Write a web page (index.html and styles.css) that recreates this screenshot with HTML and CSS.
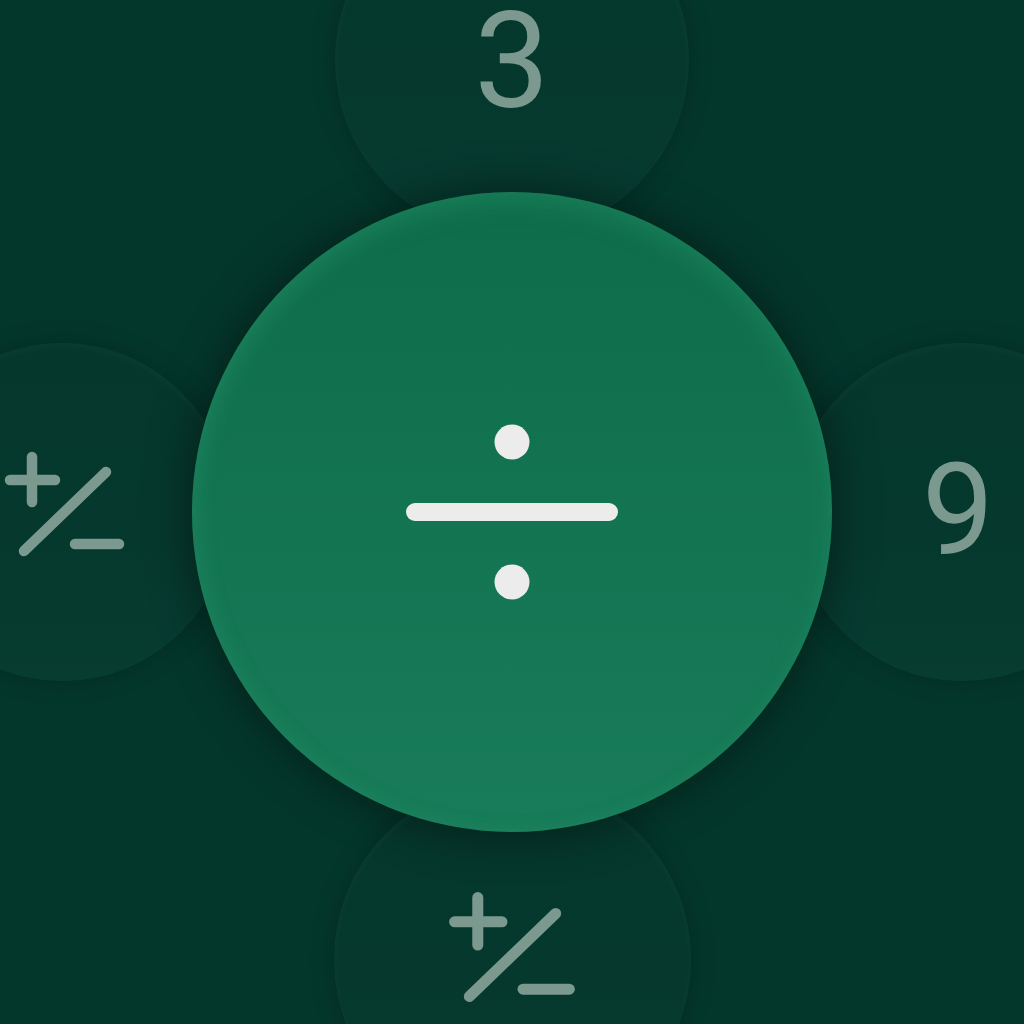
FILE: index.html
```html
<!DOCTYPE html>
<html lang="en">
<head>
<meta charset="utf-8">
<title>Calculator keys</title>
<link rel="stylesheet" href="styles.css">
</head>
<body>
<div class="stage">
  <div class="key key-top"><span class="digit digit-3">3</span></div>
  <div class="key key-left">
    <svg class="pm pm-left" viewBox="0 0 130 115" width="130" height="115" aria-label="plus minus">
      <g stroke="currentColor" stroke-width="10.5" stroke-linecap="round" fill="none">
        <line x1="10" y1="35" x2="55" y2="35"/>
        <line x1="32" y1="12" x2="32" y2="57"/>
        <line x1="24" y1="106" x2="106" y2="27"/>
        <line x1="75" y1="99" x2="119" y2="99"/>
      </g>
    </svg>
  </div>
  <div class="key key-right"><span class="digit digit-9">9</span></div>
  <div class="key key-bottom">
    <svg class="pm pm-bottom" viewBox="0 0 130 115" width="137" height="121" aria-label="plus minus">
      <g stroke="currentColor" stroke-width="10.5" stroke-linecap="round" fill="none">
        <line x1="10" y1="35" x2="55" y2="35"/>
        <line x1="32" y1="12" x2="32" y2="57"/>
        <line x1="24" y1="106" x2="106" y2="27"/>
        <line x1="75" y1="99" x2="119" y2="99"/>
      </g>
    </svg>
  </div>
  <div class="key key-main">
    <svg class="divide" viewBox="0 0 212 180" width="212" height="180" aria-label="divide">
      <line x1="9" y1="90" x2="203" y2="90" stroke="currentColor" stroke-width="18" stroke-linecap="round"/>
      <circle cx="106" cy="20" r="17.5" fill="currentColor"/>
      <circle cx="106" cy="160" r="17.5" fill="currentColor"/>
    </svg>
  </div>
</div>
</body>
</html>
```
FILE: styles.css
```css
html, body {
  margin: 0;
  padding: 0;
  width: 1024px;
  height: 1024px;
  overflow: hidden;
  background: #04372c;
}

.stage {
  position: relative;
  width: 1024px;
  height: 1024px;
  overflow: hidden;
  background: #04372c;
  font-family: Roboto, "Noto Sans", "DejaVu Sans", sans-serif;
}

.key {
  position: absolute;
  border-radius: 50%;
  display: flex;
  align-items: center;
  justify-content: center;
  box-sizing: border-box;
  color: #7b998e;
  background: linear-gradient(180deg, #05372c 0%, #06392e 60%, #073c31 100%);
  box-shadow:
    inset 0 3px 10px rgba(255, 255, 255, 0.035),
    0 0 24px rgba(0, 0, 0, 0.22);
}

.key-top {
  left: 335px;
  top: -117px;
  width: 354px;
  height: 354px;
}

.key-bottom {
  left: 334px;
  top: 781px;
  width: 357px;
  height: 357px;
}

.key-left {
  left: -107px;
  top: 343px;
  width: 338px;
  height: 338px;
}

.key-right {
  left: 793px;
  top: 343px;
  width: 338px;
  height: 338px;
}

.key-main {
  left: 192px;
  top: 192px;
  width: 640px;
  height: 640px;
  color: #ececec;
  background: linear-gradient(180deg, #0e6d4b 0%, #137452 50%, #187b59 100%);
  box-shadow:
    inset 0 10px 28px rgba(80, 200, 150, 0.16),
    inset 6px 0 24px rgba(80, 200, 150, 0.06),
    0 0 44px 6px rgba(0, 0, 0, 0.38);
  z-index: 2;
}

.digit {
  line-height: 0.9;
  font-weight: 400;
  display: block;
}

.digit-3 {
  font-size: 134px;
  margin-top: 4px;
}

.digit-9 {
  font-size: 128px;
  margin-right: 8px;
  margin-bottom: 2px;
}

.pm {
  display: block;
}

.pm-left {
  margin-left: 6px;
  margin-bottom: 19px;
}

.pm-bottom {
  margin-bottom: 28px;
}

.divide {
  display: block;
}
```
